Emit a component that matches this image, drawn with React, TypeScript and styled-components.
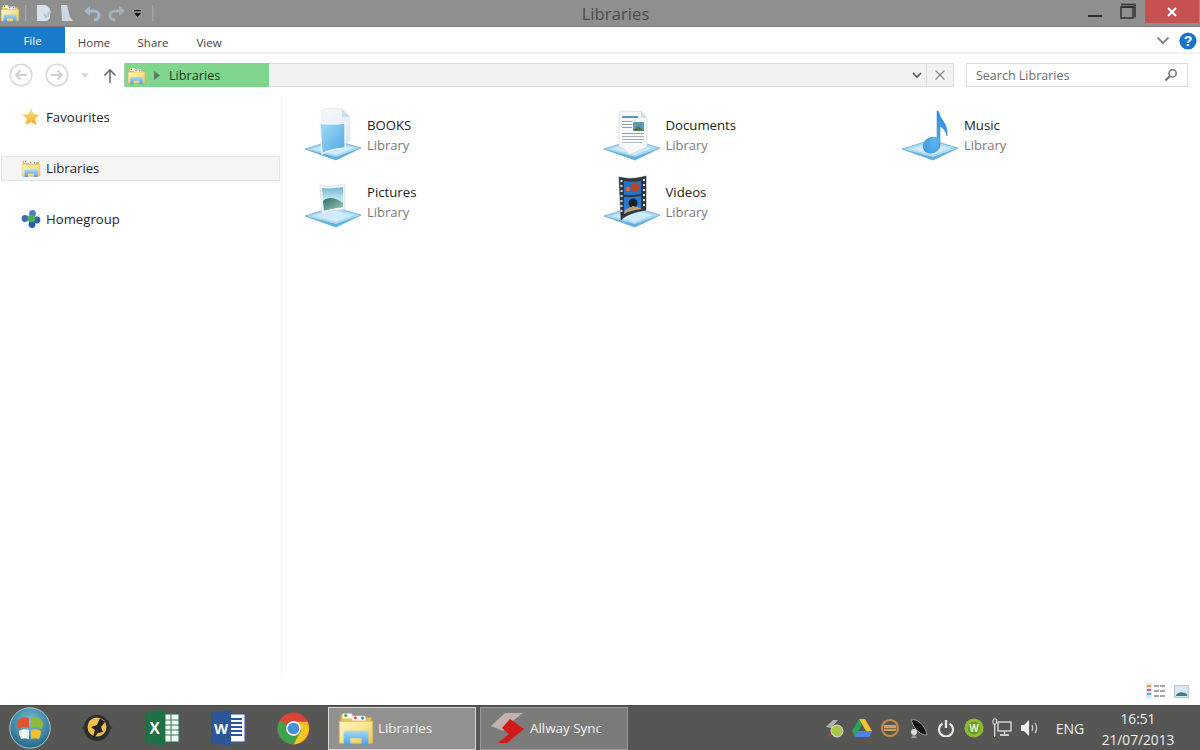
import React from "react";
import styled, { createGlobalStyle } from "styled-components";

const Global = createGlobalStyle`
  html, body { margin: 0; padding: 0; background: #fff; overflow: hidden; }
  * { box-sizing: border-box; }
  body { font-family: "Open Sans", "Noto Sans", "Liberation Sans", sans-serif; }
`;

const Page = styled.div`
  width: 1200px; height: 750px; display: flex; flex-direction: column; background: #fff; position: relative;
`;
const TitleBar = styled.header`
  height: 27px; flex: none; display: flex; background: #8f8f8f; border-bottom: 1px solid #7b7b7b;
`;
const Qat = styled.div`
  width: 154px; flex: none; display: flex; align-items: center; height: 26px;
`;
const Title = styled.div`
  flex: 1; text-align: center; font-size: 16.5px; line-height: 28px; color: #4a4a4a; letter-spacing: .1px;
`;
const WinControls = styled.div`
  width: 123px; flex: none; display: flex; align-items: flex-start;
`;
const CloseBtn = styled.div`
  width: 54px; height: 23px; margin-left: 8px; background: #c75050; display: flex; align-items: center; justify-content: center;
`;
const QatSvg = styled.svg`display: block; flex: none;`;

const Tabs = styled.nav`
  height: 27px; flex: none; display: flex; align-items: stretch; border-bottom: 2px solid #f0f0f0; background: #fff;
`;
const FileTab = styled.div`
  width: 65px; height: 26px; background: #1979ca; color: #fff; font-size: 11.5px; display: flex; align-items: center; justify-content: center; font-weight: 400;
`;
const Tab = styled.div<{ $w: number }>`
  width: ${p => p.$w}px; color: #444; font-size: 11.5px; display: flex; align-items: center; justify-content: center; padding-top: 6px;
`;
const TabRight = styled.div`
  margin-left: auto; display: flex; align-items: center; gap: 9px; padding-right: 3px; padding-top: 2px;
`;

const AddressRow = styled.div`
  height: 41px; flex: none; display: flex; align-items: center; padding-top: 1px; background: #fff;
`;
const NavButtons = styled.div`
  width: 124px; flex: none;
`;
const AddressBar = styled.div`
  width: 830px; height: 24px; flex: none; display: flex; align-items: stretch; background: #f2f2f2; border: 1px solid #dcdcdc; border-left-color: #b8c8b8;
`;
const Crumb = styled.div`
  width: 144px; background: #80d68c; display: flex; align-items: center; gap: 8px; padding-left: 2px; color: #1d3a22; font-size: 12.7px; margin: -1px 0;
`;
const CrumbSpacer = styled.div`flex: 1;`;
const AddrBtn = styled.div<{ $divider?: boolean }>`
  width: ${p => (p.$divider ? 27 : 18)}px; display: flex; align-items: center; justify-content: center; ${p => p.$divider ? "border-left: 1px solid #dcdcdc;" : ""}
`;
const SearchBox = styled.div`
  width: 222px; height: 24px; margin-left: 12px; flex: none; border: 1px solid #dcdcdc; display: flex; align-items: center; justify-content: space-between; padding: 0 9px; color: #6d6d6d; font-size: 12.5px; background: #fff;
`;

const Body = styled.main`
  flex: 1; display: flex; min-height: 0;
`;
const NavPane = styled.aside`
  width: 282px; flex: none; border-right: 1px solid #f6f6f6; padding-top: 10px; display: flex; flex-direction: column; margin-bottom: 2px;
`;
const NavItem = styled.div<{ $selected?: boolean }>`
  height: 25px; width: 279px; margin-left: 1px; margin-bottom: 26px; display: flex; align-items: center; gap: 5px; padding: 0 0 2px 19px; font-size: 13.2px; color: #262626;
  border: 1px solid ${p => (p.$selected ? "#e4e4e4" : "transparent")};
  background: ${p => (p.$selected ? "#f5f5f5" : "transparent")};
`;
const Content = styled.section`
  flex: 1; padding: 10px 0 0 22px; display: grid; grid-template-columns: repeat(3, 298.5px); grid-auto-rows: 66.5px; align-content: start;
`;
const Item = styled.div`
  display: flex; align-items: flex-start; gap: 5px;
`;
const ItemText = styled.div`
  padding-top: 10px; display: flex; flex-direction: column;
`;
const ItemName = styled.div`font-size: 13.2px; line-height: 20px; color: #222;`;
const ItemSub = styled.div`font-size: 13px; line-height: 20px; color: #7a7a7a;`;

const StatusBar = styled.div`
  height: 25px; flex: none; display: flex; justify-content: flex-end; align-items: center; gap: 9px; padding-right: 11px; padding-bottom: 3px;
`;

const Taskbar = styled.footer`
  height: 45px; flex: none; display: flex; align-items: center; background: #565655; border-top: 1px solid #474746;
`;
const Pinned = styled.div`
  width: 328px; flex: none; height: 100%; display: flex; align-items: center; padding-left: 9px;
`;
const PinSlot = styled.div<{ $w: number }>`
  width: ${p => p.$w}px; flex: none; display: flex; justify-content: flex-start; align-items: center;
`;
const TaskButton = styled.div<{ $active?: boolean }>`
  width: 148px; height: 43px; flex: none; margin-right: 4px; display: flex; align-items: center; gap: ${p => (p.$active ? 3 : 5)}px; padding-left: ${p => (p.$active ? 8 : 10)}px; color: #f2f2f2; font-size: 13.4px;
  border: 1px solid ${p => (p.$active ? "#d8d8d8" : "#9a9a99")};
  background: ${p => (p.$active ? "#919190" : "#7b7b7a")};
`;
const Tray = styled.div`
  flex: 1; display: flex; align-items: center; padding-left: 188px; height: 100%;
`;
const TraySlot = styled.div`
  width: 28px; flex: none; display: flex; justify-content: center; align-items: center;
`;
const Lang = styled.div`
  width: 50px; flex: none; text-align: center; font-size: 14px; color: #eee; padding-left: 2px;
`;
const Clock = styled.div`
  width: 88px; flex: none; text-align: center; color: #eee; font-size: 13.7px; line-height: 21px; padding-top: 2px; white-space: nowrap;
`;

const FolderIcon = ({ size = 20 }: { size?: number }) => (
  <svg width={size} height={size} viewBox="0 0 20 20" style={{ flex: "none", display: "block" }}>
    <defs>
      <linearGradient id="fold" x1="0" y1="0" x2="1" y2="1">
        <stop offset="0" stopColor="#fff6c9" />
        <stop offset=".5" stopColor="#fbe48e" />
        <stop offset="1" stopColor="#eac25a" />
      </linearGradient>
      <linearGradient id="foldBlue" x1="0" y1="0" x2="0" y2="1">
        <stop offset="0" stopColor="#a5d8f6" />
        <stop offset="1" stopColor="#4a9fe0" />
      </linearGradient>
    </defs>
    <path d="M2 3h5l1 1.5h10v13.5H2z" fill="#e8c25c" stroke="#c9a54a" strokeWidth=".6" />
    <rect x="3" y="2.4" width="5" height="2.5" fill="#fff" />
    <rect x="8" y="3.6" width="7" height="2.5" fill="#fff" />
    <circle cx="4.6" cy="3.4" r=".8" fill="#4aa050" />
    <circle cx="9.6" cy="4.6" r=".8" fill="#d84a3a" />
    <circle cx="13.4" cy="4.8" r=".8" fill="#3a80d0" />
    <path d="M1.2 6.5h17.6V18H1.2z" fill="url(#fold)" stroke="#dcb650" strokeWidth=".4" />
    <path d="M3.5 19v-6c0-1 .6-1.5 1.5-1.5h10c1 0 1.5.6 1.5 1.5v6h-3.5v-3.6h-6V19z" fill="url(#foldBlue)" />
  </svg>
);

const Platform = () => (
  <>
    <path d="M1 44 30 35 57 43 32 55z" fill="#a9d8f0" stroke="#69aed6" strokeWidth=".8" />
    <path d="M1 44 32 55 57 43 32 52z" fill="#5fb0df" />
    <path d="M8 44 30 38 50 43 32 50z" fill="#cfeafa" />
  </>
);

type Kind = "books" | "docs" | "music" | "pictures" | "videos";

const LibIcon = ({ kind }: { kind: Kind }) => (
  <svg width={58} height={58} viewBox="0 0 58 58" style={{ flex: "none", display: "block" }}>
    <defs>
      <linearGradient id="sky" x1="0" y1="0" x2="1" y2="1">
        <stop offset="0" stopColor="#a4dcf6" />
        <stop offset="1" stopColor="#4aa6e4" />
      </linearGradient>
      <linearGradient id="photoSky" x1="0" y1="0" x2="0" y2="1">
        <stop offset="0" stopColor="#6fb4d0" />
        <stop offset=".5" stopColor="#c4e6f0" />
        <stop offset="1" stopColor="#d4ecee" />
      </linearGradient>
      <linearGradient id="hill" x1="0" y1="0" x2="1" y2="1">
        <stop offset="0" stopColor="#2f7060" />
        <stop offset="1" stopColor="#9accc0" />
      </linearGradient>
      <linearGradient id="pale" x1="0" y1="0" x2="1" y2="1">
        <stop offset="0" stopColor="#f6f9fc" />
        <stop offset="1" stopColor="#dfe8f0" />
      </linearGradient>
      <radialGradient id="note" cx=".45" cy=".7" r=".8">
        <stop offset="0" stopColor="#62b6f2" />
        <stop offset="1" stopColor="#2484d8" />
      </radialGradient>
    </defs>
    <Platform />
    {kind === "books" && (
      <>
        <path d="M18 5 C26 2 33 3 38 4 L46 12 V36 L24 44 L18 36z" fill="url(#pale)" stroke="#d4dfea" strokeWidth=".6" />
        <path d="M38 4 V12 H46z" fill="#cfdbe6" />
        <path d="M16 18 C24 20 33 19 41 18 V43 C33 44 24 44 18 49z" fill="url(#sky)" stroke="#eef7fd" strokeWidth="1.4" />
      </>
    )}
    {kind === "docs" && (
      <>
        <path d="M16 7 C26 5 34 7 38 6 L44 13 V42 L26 50 C24 46 20 42 16 42z" fill="#f8f9fa" stroke="#c9ced4" strokeWidth=".6" />
        <path d="M38 6 V13 H44z" fill="#d8dee4" />
        <rect x="19" y="11" width="16" height="2" fill="#5f92b8" />
        <rect x="19" y="16" width="10" height="1" fill="#9aa0a8" />
        <rect x="19" y="19" width="10" height="1" fill="#9aa0a8" />
        <rect x="19" y="22" width="10" height="1" fill="#9aa0a8" />
        <rect x="30" y="17" width="11" height="9" fill="#5a9ab8" />
        <path d="M30 26 L35 21 41 26z" fill="#4e7a4a" />
        <rect x="19" y="28" width="22" height="1" fill="#9aa0a8" />
        <rect x="19" y="31" width="22" height="1" fill="#a8aeb6" />
        <rect x="19" y="34" width="22" height="1" fill="#a8aeb6" />
        <rect x="19" y="37" width="20" height="1" fill="#b4bac2" />
      </>
    )}
    {kind === "music" && (
      <path d="M36 6 C38 6 38 8 39 11 C42 17 47 20 46 31 C45 26 42 23 39 21 L39 40 C39 45 33 49 28 48 C23 47 21 43 23 38 C25 33 31 31 36 33z" fill="url(#note)" stroke="#2b80cc" strokeWidth=".5" />
    )}
    {kind === "pictures" && (
      <>
        <path d="M16 13 C24 15 33 14 41 12 V37 C33 38 24 39 18 42z" fill="#f4f8fb" stroke="#ced9e2" strokeWidth=".6" />
        <path d="M18 16 C24 17 33 16 39 15 V35 C33 36 24 37 20 39z" fill="url(#photoSky)" />
        <path d="M19 29 C25 24 31 26 39 31 V35 C33 36 24 37 20 39z" fill="url(#hill)" />
      </>
    )}
    {kind === "videos" && (
      <>
        <path d="M16 5 C24 7 33 7 43 4 V38 C33 40 24 42 18 48z" fill="#2f3a40" stroke="#1f272c" strokeWidth=".5" />
        <path d="M21 9 C26 10 33 10 38 9 V22 C32 23 26 23 21 23z" fill="#2873c9" />
        <path d="M21 25 C26 25 32 25 38 24 V37 C32 38 26 39 21 42z" fill="#2a78cf" />
        <circle cx="32" cy="15" r="4.5" fill="#b8452e" />
        <circle cx="25" cy="17" r="2.2" fill="#d8702e" />
        <circle cx="30" cy="31" r="4.5" fill="#15202a" />
        <path d="M22 38 L30 34 38 36 V37 C32 38 26 39 21 42z" fill="#c8a070" />
        <g fill="#d8dde0">
          <rect x="17.5" y="8" width="2" height="2" /><rect x="17.5" y="13" width="2" height="2" /><rect x="17.5" y="18" width="2" height="2" />
          <rect x="17.5" y="23" width="2" height="2" /><rect x="17.5" y="28" width="2" height="2" /><rect x="17.5" y="33" width="2" height="2" />
          <rect x="17.5" y="38" width="2" height="2" /><rect x="40" y="7" width="2" height="2" /><rect x="40" y="12" width="2" height="2" />
          <rect x="40" y="17" width="2" height="2" /><rect x="40" y="22" width="2" height="2" /><rect x="40" y="27" width="2" height="2" /><rect x="40" y="32" width="2" height="2" />
        </g>
      </>
    )}
  </svg>
);

const Circle = ({ dir }: { dir: "l" | "r" }) => (
  <svg width="24" height="24" viewBox="0 0 24 24" style={{ position: "absolute", left: dir === "l" ? 9 : 45, top: 63 }}>
    <circle cx="12" cy="12" r="10.8" fill="none" stroke="#dadada" strokeWidth="1.6" />
    <path d={dir === "l" ? "M18 12H7M11.5 7.5 7 12l4.5 4.5" : "M6 12h11M12.5 7.5 17 12l-4.5 4.5"} fill="none" stroke="#d0d0d0" strokeWidth="2" />
  </svg>
);

const items: { name: string; kind: Kind }[] = [
  { name: "BOOKS", kind: "books" },
  { name: "Documents", kind: "docs" },
  { name: "Music", kind: "music" },
  { name: "Pictures", kind: "pictures" },
  { name: "Videos", kind: "videos" },
];

export default function App() {
  return (
    <Page>
      <Global />
      <TitleBar>
        <Qat>
          <FolderIcon />
          <QatSvg width="134" height="26" viewBox="0 0 134 26">
            <rect x="5" y="5" width="1.4" height="16" fill="#a6a6a6" />
            <path d="M17 5h9l4 4v9l-3 3H17z" fill="#d8e2ec" />
            <path d="M24 14l2 3 5-6" fill="none" stroke="#b8c6d4" strokeWidth="2" />
            <path d="M41 5h6l3 12 3 4H42z" fill="#ced8e2" />
            <path d="M70 6l-6 5 6 5z" fill="#a5b9cf" />
            <path d="M69 11h5c3 0 5 2 5 4.5s-2 4.5-5 4.5" fill="none" stroke="#a5b9cf" strokeWidth="3" />
            <path d="M99 6l6 5-6 5z" fill="#a5b0bb" />
            <path d="M100 11h-5c-3 0-5 2-5 4.5s2 4.5 5 4.5" fill="none" stroke="#a5b0bb" strokeWidth="3" />
            <rect x="114" y="10" width="7" height="1.2" fill="#111" />
            <path d="M114 13h7l-3.5 4z" fill="#111" />
            <rect x="132" y="5" width="1.4" height="16" fill="#a6a6a6" />
          </QatSvg>
        </Qat>
        <Title>Libraries</Title>
        <WinControls>
          <QatSvg width="60" height="23" viewBox="0 0 60 23">
            <rect x="11" y="15" width="14" height="2" fill="#2c2c2c" />
            <rect x="44" y="7" width="12" height="11" fill="none" stroke="#333" strokeWidth="1.5" />
            <path d="M44 4.5h14v13" fill="none" stroke="#333" strokeWidth="1.5" />
            <rect x="44" y="6" width="13" height="2" fill="#333" />
          </QatSvg>
          <CloseBtn>
            <svg width="12" height="12" viewBox="0 0 12 12"><path d="M2 2l8 8M10 2l-8 8" stroke="#fff" strokeWidth="2.2" /></svg>
          </CloseBtn>
        </WinControls>
      </TitleBar>

      <Tabs>
        <FileTab>File</FileTab>
        <Tab $w={58}>Home</Tab>
        <Tab $w={60}>Share</Tab>
        <Tab $w={52}>View</Tab>
        <TabRight>
          <svg width="14" height="9" viewBox="0 0 14 9"><path d="M1.5 1.5 7 7l5.5-5.5" fill="none" stroke="#8c8c8c" strokeWidth="2" /></svg>
          <svg width="18" height="18" viewBox="0 0 18 18">
            <circle cx="9" cy="9" r="8.6" fill="#1a73c4" />
            <text x="9" y="14" textAnchor="middle" fontFamily="'Liberation Sans', sans-serif" fontWeight="700" fontSize="14" fill="#fff">?</text>
          </svg>
        </TabRight>
      </Tabs>

      <AddressRow>
        <NavButtons>
          <Circle dir="l" />
          <Circle dir="r" />
          <svg width="8" height="5" viewBox="0 0 8 5" style={{ position: "absolute", left: 81, top: 73 }}><path d="M0 0h8L4 5z" fill="#d8d8d8" /></svg>
          <svg width="14" height="15" viewBox="0 0 14 15" style={{ position: "absolute", left: 103, top: 68 }}><path d="M7 15V2M1.5 7.5 7 2l5.5 5.5" fill="none" stroke="#6e6e6e" strokeWidth="1.6" /></svg>
        </NavButtons>
        <AddressBar>
          <Crumb>
            <FolderIcon size={19} />
            <svg width="6" height="9" viewBox="0 0 6 9" style={{ flex: "none" }}><path d="M0 0l6 4.5L0 9z" fill="#5e7a62" /></svg>
            <span style={{ marginLeft: 1 }}>Libraries</span>
          </Crumb>
          <CrumbSpacer />
          <AddrBtn>
            <svg width="10" height="7" viewBox="0 0 10 7"><path d="M1 1l4 4 4-4" fill="none" stroke="#555" strokeWidth="1.6" /></svg>
          </AddrBtn>
          <AddrBtn $divider>
            <svg width="10" height="10" viewBox="0 0 10 10"><path d="M.5.5l9 9M9.5.5l-9 9" stroke="#8a8a8a" strokeWidth="1.3" /></svg>
          </AddrBtn>
        </AddressBar>
        <SearchBox>
          <span>Search Libraries</span>
          <svg width="14" height="14" viewBox="0 0 14 14"><circle cx="8.6" cy="5.4" r="3.6" fill="none" stroke="#777" strokeWidth="1.6" /><path d="M6 8l-4.5 4.5" stroke="#777" strokeWidth="2.2" /></svg>
        </SearchBox>
      </AddressRow>

      <Body>
        <NavPane>
          <NavItem>
            <svg width="20" height="20" viewBox="0 0 20 20" style={{ flex: "none" }}>
              <defs><linearGradient id="star" x1="0" y1="0" x2="0" y2="1"><stop offset="0" stopColor="#fde48a" /><stop offset="1" stopColor="#f4a92c" /></linearGradient></defs>
              <path d="M10 1.5l2.6 5.6 6 .7-4.4 4.1 1.2 6L10 15l-5.4 3 1.2-6L1.4 7.8l6-.7z" fill="url(#star)" />
            </svg>
            Favourites
          </NavItem>
          <NavItem $selected><FolderIcon />Libraries</NavItem>
          <NavItem>
            <svg width="20" height="20" viewBox="0 0 20 20" style={{ flex: "none" }}>
              <circle cx="4" cy="9.5" r="3.4" fill="#3a6ec0" />
              <circle cx="11.5" cy="4.5" r="3.4" fill="#4a80c8" />
              <circle cx="16" cy="11" r="3.4" fill="#2f62b4" />
              <circle cx="11" cy="15.5" r="3.4" fill="#2a5cab" />
              <circle cx="10.5" cy="9.5" r="3.8" fill="#4caf50" />
            </svg>
            Homegroup
          </NavItem>
        </NavPane>
        <Content>
          {items.map(it => (
            <Item key={it.name}>
              <LibIcon kind={it.kind} />
              <ItemText>
                <ItemName>{it.name}</ItemName>
                <ItemSub>Library</ItemSub>
              </ItemText>
            </Item>
          ))}
        </Content>
      </Body>

      <StatusBar>
        <svg width="19" height="16" viewBox="0 0 19 16">
          <rect x="0" y="0" width="6" height="16" fill="#dfe9f2" />
          <rect x="1" y="2" width="4" height="2" fill="#d8a040" /><rect x="1" y="6" width="4" height="2" fill="#c86060" /><rect x="1" y="10" width="4" height="2" fill="#60a0d8" />
          <path d="M8 3h11M8 8h11M8 13h11" stroke="#7d8a96" strokeWidth="1.4" strokeDasharray="5 1" />
        </svg>
        <svg width="15" height="13" viewBox="0 0 15 13">
          <rect x=".5" y=".5" width="14" height="12" fill="#d6e8f3" stroke="#b5c4d0" />
          <path d="M2 10c3-4 7-3 11-1v2H2z" fill="#3f7f7a" />
        </svg>
      </StatusBar>

      <Taskbar>
        <Pinned>
          <PinSlot $w={71}>
            <svg width="42" height="42" viewBox="0 0 42 42">
              <defs><radialGradient id="orb" cx=".5" cy=".35" r=".7"><stop offset="0" stopColor="#7cc4d6" /><stop offset="1" stopColor="#1d5f80" /></radialGradient></defs>
              <circle cx="21" cy="21" r="20.2" fill="url(#orb)" stroke="#a7cfdc" strokeWidth="1" />
              <path d="M20 11c-5-2-9 0-11 3-2 3-1 6 1 8 3-2 6-2 10-1z" fill="#e2552c" />
              <path d="M22 11c5-2 9 0 11 3 2 3 1 6-1 8-3-2-6-2-10-1z" fill="#8fbb3a" />
              <path d="M20 23c-3-1-7-1-10 1 0 3 1 6 2 8 3-1 5-1 8 0z" fill="#f1f1f1" />
              <path d="M22 23c3-1 7-1 10 1 0 3-1 6-2 8-3-1-5-1-8 0z" fill="#f2c22e" />
            </svg>
          </PinSlot>
          <PinSlot $w={65}>
            <svg width="34" height="32" viewBox="0 0 34 32">
              <path d="M1 16l7-5 3 10zM33 16l-7-5-3 10z" fill="#3a3a3a" />
              <circle cx="17" cy="16" r="13" fill="#2d2d2d" />
              <circle cx="17" cy="15" r="9.5" fill="#f0be4a" />
              <path d="M20 6l-3 7-6 2 4 3-3 10 6-7 5-1-2-5 4-5z" fill="#222" />
            </svg>
          </PinSlot>
          <PinSlot $w={66}>
            <svg width="34" height="36" viewBox="0 0 34 36">
              <rect x="14" y="4" width="20" height="28" fill="#f4f8f5" stroke="#217346" />
              <path d="M20 4v28M26 4v28M14 10h20M14 15h20M14 20h20M14 25h20" stroke="#217346" strokeWidth=".9" />
              <path d="M0 3 20 0v36L0 33z" fill="#1f7145" />
              <text x="9.5" y="24" textAnchor="middle" fontFamily="'Liberation Sans', sans-serif" fontWeight="700" fontSize="16" fill="#fff">X</text>
            </svg>
          </PinSlot>
          <PinSlot $w={66}>
            <svg width="34" height="36" viewBox="0 0 34 36">
              <rect x="14" y="4" width="20" height="28" fill="#f7f9fc" stroke="#2b579a" />
              <path d="M20 9h11M20 13h11M20 17h11M20 21h11M20 25h11" stroke="#2b579a" strokeWidth="2" />
              <path d="M0 3 20 0v36L0 33z" fill="#2b579a" />
              <text x="10" y="24" textAnchor="middle" fontFamily="'Liberation Sans', sans-serif" fontWeight="700" fontSize="15" fill="#fff">W</text>
            </svg>
          </PinSlot>
          <PinSlot $w={33}>
            <svg width="33" height="33" viewBox="0 0 34 34">
              <circle cx="17" cy="17" r="16.5" fill="#db4437" />
              <path d="M17 17 2.7 8.8A16.5 16.5 0 0 0 17 33.5L25 19z" fill="#3fa34d" />
              <path d="M17 10h14.4A16.5 16.5 0 0 1 17 33.5L25 19z" fill="#f7c520" />
              <circle cx="17" cy="17" r="7.6" fill="#f4f4f4" />
              <circle cx="17" cy="17" r="6" fill="#4a90d9" />
            </svg>
          </PinSlot>
        </Pinned>
        <TaskButton $active>
          <FolderIcon size={38} />
          Libraries
        </TaskButton>
        <TaskButton>
          <svg width="34" height="32" viewBox="0 0 34 32" style={{ flex: "none" }}>
            <path d="M0 14 14 1h18L19 11l5 5-6 0-6 3z" fill="#c0b3ae" />
            <path d="M19 7 33 17 16 31H7l11-9-7-6z" fill="#d31a1a" />
          </svg>
          Allway Sync
        </TaskButton>
        <Tray>
          <TraySlot>
            <svg width="20" height="20" viewBox="0 0 20 20"><path d="M2 9 9 2h5l-5 6 3 3z" fill="#b5aeaa" /><circle cx="13" cy="13" r="6" fill="#a8c84a" stroke="#ddd" /><circle cx="5" cy="17" r="1.5" fill="#d33" /></svg>
          </TraySlot>
          <TraySlot>
            <svg width="20" height="18" viewBox="0 0 20 18"><path d="M7 0h6l7 12h-6z" fill="#f3c22c" /><path d="M7 0 0 12l3 6 7-12z" fill="#2da160" /><path d="M6 12h14l-3 6H3z" fill="#4a84e8" /></svg>
          </TraySlot>
          <TraySlot>
            <svg width="20" height="20" viewBox="0 0 20 20"><circle cx="10" cy="10" r="8" fill="none" stroke="#c98a48" strokeWidth="2.2" /><rect x="4" y="7" width="12" height="6" rx="1" fill="#d0a060" /><rect x="4" y="10" width="12" height="1" fill="#8a6438" /></svg>
          </TraySlot>
          <TraySlot>
            <svg width="20" height="22" viewBox="0 0 20 22"><path d="M3 3c6-2 14 5 16 15C13 18 7 14 3 3z" fill="#111" stroke="#bbb" strokeWidth=".7" /><circle cx="6" cy="15" r="3" fill="#ddd" /><path d="M5 18l-2 3h6l-2-3z" fill="#999" /></svg>
          </TraySlot>
          <TraySlot>
            <svg width="18" height="18" viewBox="0 0 18 18"><path d="M5.5 4.5a7 7 0 1 0 7 0" fill="none" stroke="#e8e8e8" strokeWidth="2.2" /><path d="M9 1v8" stroke="#e8e8e8" strokeWidth="2.4" /></svg>
          </TraySlot>
          <TraySlot>
            <svg width="20" height="20" viewBox="0 0 20 20"><circle cx="10" cy="10" r="9.5" fill="#8dbd35" /><circle cx="10" cy="10" r="6.5" fill="#6a9a22" /><text x="10" y="14" textAnchor="middle" fontFamily="'Liberation Sans', sans-serif" fontWeight="700" fontSize="10" fill="#e8f6c0">W</text></svg>
          </TraySlot>
          <TraySlot>
            <svg width="20" height="20" viewBox="0 0 20 20"><rect x="1" y="1" width="3.5" height="5" rx="1" fill="none" stroke="#eee" /><path d="M2.7 6v13" stroke="#eee" strokeWidth="1.2" /><rect x="6" y="4" width="13" height="9" fill="none" stroke="#eee" strokeWidth="1.2" /><path d="M12.5 13v3M8 17h9" stroke="#eee" strokeWidth="1.4" /></svg>
          </TraySlot>
          <TraySlot>
            <svg width="20" height="18" viewBox="0 0 20 18"><path d="M1 6h3l5-5v16l-5-5H1z" fill="#eee" /><path d="M12 6c1 2 1 4 0 6M15 4c2 3 2 7 0 10" fill="none" stroke="#ddd" strokeWidth="1.1" /></svg>
          </TraySlot>
          <Lang>ENG</Lang>
          <Clock>16:51<br />21/07/2013</Clock>
        </Tray>
      </Taskbar>
    </Page>
  );
}
